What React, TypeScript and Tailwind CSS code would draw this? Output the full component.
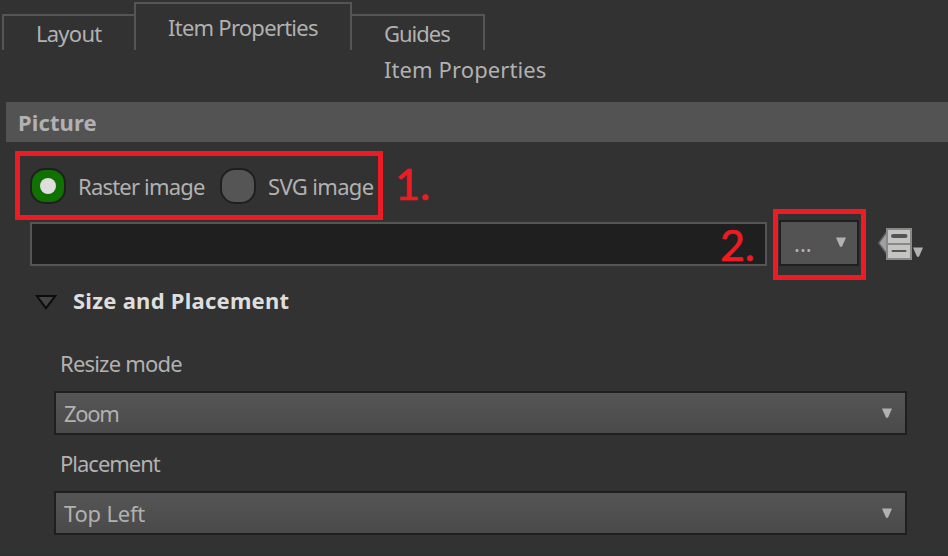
import React from "react";

function DownArrow({ className = "" }: { className?: string }) {
  return (
    <svg width="10" height="11" viewBox="0 0 10 11" className={`shrink-0 ${className}`}>
      <path d="M0 0.5H10L6.3 9Q5 11.2 3.7 9Z" fill="#b1b1b1" />
    </svg>
  );
}

function Tab({ label, className, textClass }: { label: string; className: string; textClass: string }) {
  return (
    <button className={`flex items-center border-t-2 border-[#555] text-left ${className}`}>
      <span className={textClass}>{label}</span>
    </button>
  );
}

function Select({ value, textClass }: { value: string; textClass: string }) {
  return (
    <div className="flex h-11 w-[853px] items-center justify-between border-2 border-[#1f1f1f] bg-linear-to-b from-[#555] to-[#4a4a4a] pr-[13px] pl-2">
      <span className={textClass}>{value}</span>
      <DownArrow />
    </div>
  );
}

function Radio({ checked = false }: { checked?: boolean }) {
  return (
    <span
      className={`flex size-9 shrink-0 items-center justify-center rounded-[15px] border-2 border-[#1f1f1f] ${checked ? "bg-[#107000]" : "bg-[#555]"}`}
    >
      {checked && <span className="size-4 rounded-full bg-[#dedede]" />}
    </span>
  );
}

function OverrideIcon() {
  return (
    <svg width="36" height="34" viewBox="0 0 36 34" className="shrink-0">
      <path d="M10 4.5V27.5L1.6 16Z" fill="#a0a0a4" stroke="#5c5c60" strokeWidth="1.4" />
      <rect x="10" y="2" width="24" height="30" fill="#c4c4c4" stroke="#888a85" strokeWidth="2" />
      <path d="M10 17H34" stroke="#888a85" strokeWidth="2" />
      <path d="M16 9H28.5" stroke="#555" strokeWidth="4" strokeLinecap="round" />
      <path d="M15.5 24H28.5" stroke="#555" strokeWidth="2" strokeLinecap="round" />
    </svg>
  );
}

export default function App() {
  return (
    <main className="h-[556px] w-[948px] overflow-hidden border-b border-[#352c30] bg-[#323232] font-['Noto_Sans',sans-serif] text-[22px] leading-[30px] whitespace-nowrap text-[#b1b1b1]">
      <nav className="flex h-[50px] items-end pl-0.5">
        <Tab label="Layout" className="h-9 w-[132px] border-l-2 pl-8" textClass="tracking-[-0.75px]" />
        <Tab label="Item Properties" className="h-12 w-[218px] border-x-2 pl-8" textClass="tracking-[-0.75px]" />
        <Tab label="Guides" className="h-9 w-[133px] border-r-2 pl-8" textClass="tracking-[-1px]" />
      </nav>
      <h1 className="flex h-[52px] items-start pt-1 pl-[384px] tracking-[0.1px]">Item Properties</h1>
      <h2 className="ml-1.5 flex h-10 items-center bg-[#535353] pl-3 font-bold tracking-[0.1px]">Picture</h2>

      <div className="mt-[9px] ml-[15px] flex items-center">
        <div className="flex h-[69px] w-[368px] items-center border-5 border-[#ed1c24] pl-2.5">
          <Radio checked />
          <span className="ml-3 w-[142px] shrink-0 tracking-[-0.8px]">Raster image</span>
          <Radio />
          <span className="ml-3 tracking-[-0.65px]">SVG image</span>
        </div>
        <span className="-mt-[3px] ml-3 font-['Lato',sans-serif] text-[43px] leading-[50px] text-[#ed1c24] [-webkit-text-stroke:0.7px_#ed1c24]">
          1.
        </span>
      </div>

      <div className="mt-0.5 ml-[30px] flex h-11 items-center">
        <div className="flex h-11 w-[737px] items-center justify-end border-2 border-[#555] bg-[#1f1f1f] pr-2.5">
          <span className="mt-0.5 font-['Lato',sans-serif] text-[43px] leading-[40px] text-[#ed1c24] [-webkit-text-stroke:0.7px_#ed1c24]">
            2.
          </span>
        </div>
        <div className="relative -mt-0.5 ml-3 h-[46px] w-20 shrink-0">
          <button className="flex size-full items-center justify-between border-2 border-[#1f1f1f] bg-[#535353] pr-[11px] pl-[13px]">
            <span>...</span>
            <DownArrow className="-mt-0.5" />
          </button>
          <span className="absolute -top-[11px] -left-1.5 h-[71px] w-[93px] border-5 border-[#ed1c24]" />
        </div>
        <button className="ml-[18px] flex items-end">
          <OverrideIcon />
          <DownArrow className="mb-[3px]" />
        </button>
      </div>

      <div className="mt-[19px] ml-[35px] flex h-[30px] items-center">
        <svg width="23" height="16" viewBox="0 0 23 16" className="mt-[3px]">
          <path d="M1.8 2H20.2L11 14Z" fill="#444" stroke="#0c0c0c" strokeWidth="2" />
        </svg>
        <h3 className="ml-[15px] font-bold tracking-[0.25px] text-[#dedede]">Size and Placement</h3>
      </div>

      <div className="mt-[33px] ml-[54px] flex flex-col">
        <label className="pl-1.5 tracking-[-0.8px]">Resize mode</label>
        <div className="mt-[13px]">
          <Select value="Zoom" textClass="tracking-[-1.3px]" />
        </div>
        <label className="mt-[13px] pl-1.5 tracking-[-1px]">Placement</label>
        <div className="mt-[13px]">
          <Select value="Top Left" textClass="tracking-[-0.2px]" />
        </div>
      </div>
    </main>
  );
}
